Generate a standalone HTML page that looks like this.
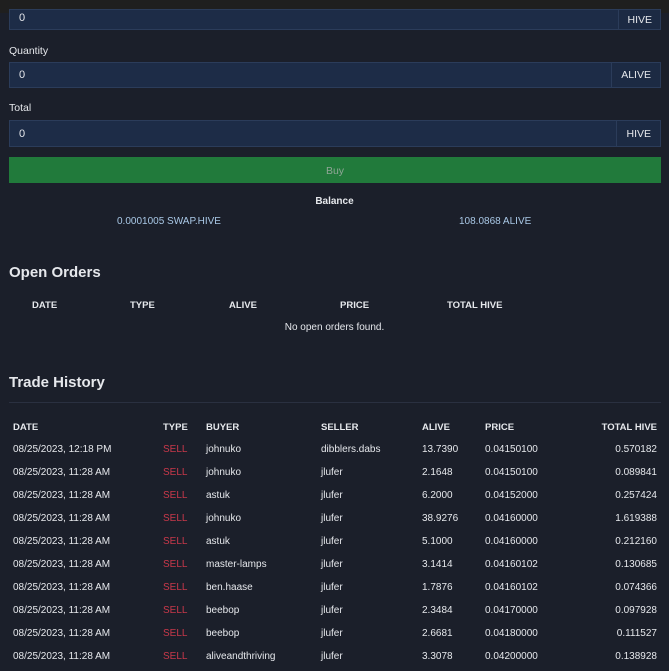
<!DOCTYPE html><html><head><style>
body{margin:0;width:669px;height:671px;overflow:hidden;background:#1b1f2a;font-family:"Liberation Sans",sans-serif;color:#e6e8ec;font-size:10px;position:relative}
.a{position:absolute}
.inp{position:absolute;left:9px;width:652px;background:#1d2c47;border:1px solid #2b3c5a;box-sizing:border-box}
.inp span{position:absolute;left:9px;top:50%;transform:translateY(-50%);font-size:11px}
.inp b{position:absolute;right:0;top:0;bottom:0;border-left:1px solid #2b3c5a;font-weight:normal;display:flex;align-items:center;padding:0 9px;font-size:10.5px;background:#1c2a43}
.h{font-weight:bold;font-size:10px}
.th{font-weight:bold;font-size:9.5px;position:absolute}
.r{position:absolute;font-size:10px}
</style></head><body>
<div class="a" style="left:0;top:0;width:669px;height:13px;background:#1f1f1f"></div>
<div class="inp" style="top:9px;height:21px"><span style="top:8px">0</span><b style="padding:0 8px">HIVE</b></div>
<div class="a" style="left:9px;top:45px;font-size:10.5px">Quantity</div>
<div class="inp" style="top:62px;height:26px"><span>0</span><b>ALIVE</b></div>
<div class="a" style="left:9px;top:102px;font-size:10.5px">Total</div>
<div class="inp" style="top:120px;height:27px"><span>0</span><b>HIVE</b></div>
<div class="a" style="left:9px;top:157px;width:652px;height:26px;background:#217a3b;color:#8fa596;font-size:10.5px;text-align:center;line-height:28px">Buy</div>
<div class="a h" style="left:0;width:669px;text-align:center;top:196px">Balance</div>
<div class="a" style="left:117px;top:216px;color:#a9c8e6">0.0001005 SWAP.HIVE</div>
<div class="a" style="left:459px;top:216px;color:#a9c8e6">108.0868 ALIVE</div>
<div class="a" style="left:9px;top:264px;font-size:15px;font-weight:bold">Open Orders</div>
<div class="th" style="left:32px;top:300px">DATE</div>
<div class="th" style="left:130px;top:300px">TYPE</div>
<div class="th" style="left:229px;top:300px">ALIVE</div>
<div class="th" style="left:340px;top:300px">PRICE</div>
<div class="th" style="left:447px;top:300px">TOTAL HIVE</div>
<div class="a" style="left:0;width:669px;text-align:center;top:322px;font-size:10px">No open orders found.</div>
<div class="a" style="left:9px;top:374px;font-size:15px;font-weight:bold">Trade History</div>
<div class="a" style="left:9px;top:402px;width:652px;height:1px;background:#2a3040"></div>
<div class="th" style="left:13px;top:422px">DATE</div>
<div class="th" style="left:163px;top:422px">TYPE</div>
<div class="th" style="left:206px;top:422px">BUYER</div>
<div class="th" style="left:321px;top:422px">SELLER</div>
<div class="th" style="left:422px;top:422px">ALIVE</div>
<div class="th" style="left:485px;top:422px">PRICE</div>
<div class="th" style="right:12px;top:422px">TOTAL HIVE</div>
<div id="rows"></div>
<script>
var d=[["08/25/2023, 12:18 PM","johnuko","dibblers.dabs","13.7390","0.04150100","0.570182"],
["08/25/2023, 11:28 AM","johnuko","jlufer","2.1648","0.04150100","0.089841"],
["08/25/2023, 11:28 AM","astuk","jlufer","6.2000","0.04152000","0.257424"],
["08/25/2023, 11:28 AM","johnuko","jlufer","38.9276","0.04160000","1.619388"],
["08/25/2023, 11:28 AM","astuk","jlufer","5.1000","0.04160000","0.212160"],
["08/25/2023, 11:28 AM","master-lamps","jlufer","3.1414","0.04160102","0.130685"],
["08/25/2023, 11:28 AM","ben.haase","jlufer","1.7876","0.04160102","0.074366"],
["08/25/2023, 11:28 AM","beebop","jlufer","2.3484","0.04170000","0.097928"],
["08/25/2023, 11:28 AM","beebop","jlufer","2.6681","0.04180000","0.111527"],
["08/25/2023, 11:28 AM","aliveandthriving","jlufer","3.3078","0.04200000","0.138928"]];
var h="";d.forEach(function(r,i){var t=444+i*23;
h+='<div class="r" style="left:13px;top:'+t+'px">'+r[0]+'</div><div class="r" style="left:163px;top:'+t+'px;color:#c8384a">SELL</div><div class="r" style="left:206px;top:'+t+'px">'+r[1]+'</div><div class="r" style="left:321px;top:'+t+'px">'+r[2]+'</div><div class="r" style="left:422px;top:'+t+'px">'+r[3]+'</div><div class="r" style="left:485px;top:'+t+'px">'+r[4]+'</div><div class="r" style="right:12px;top:'+t+'px">'+r[5]+'</div>';});
document.getElementById("rows").innerHTML=h;
</script>
</body></html>
